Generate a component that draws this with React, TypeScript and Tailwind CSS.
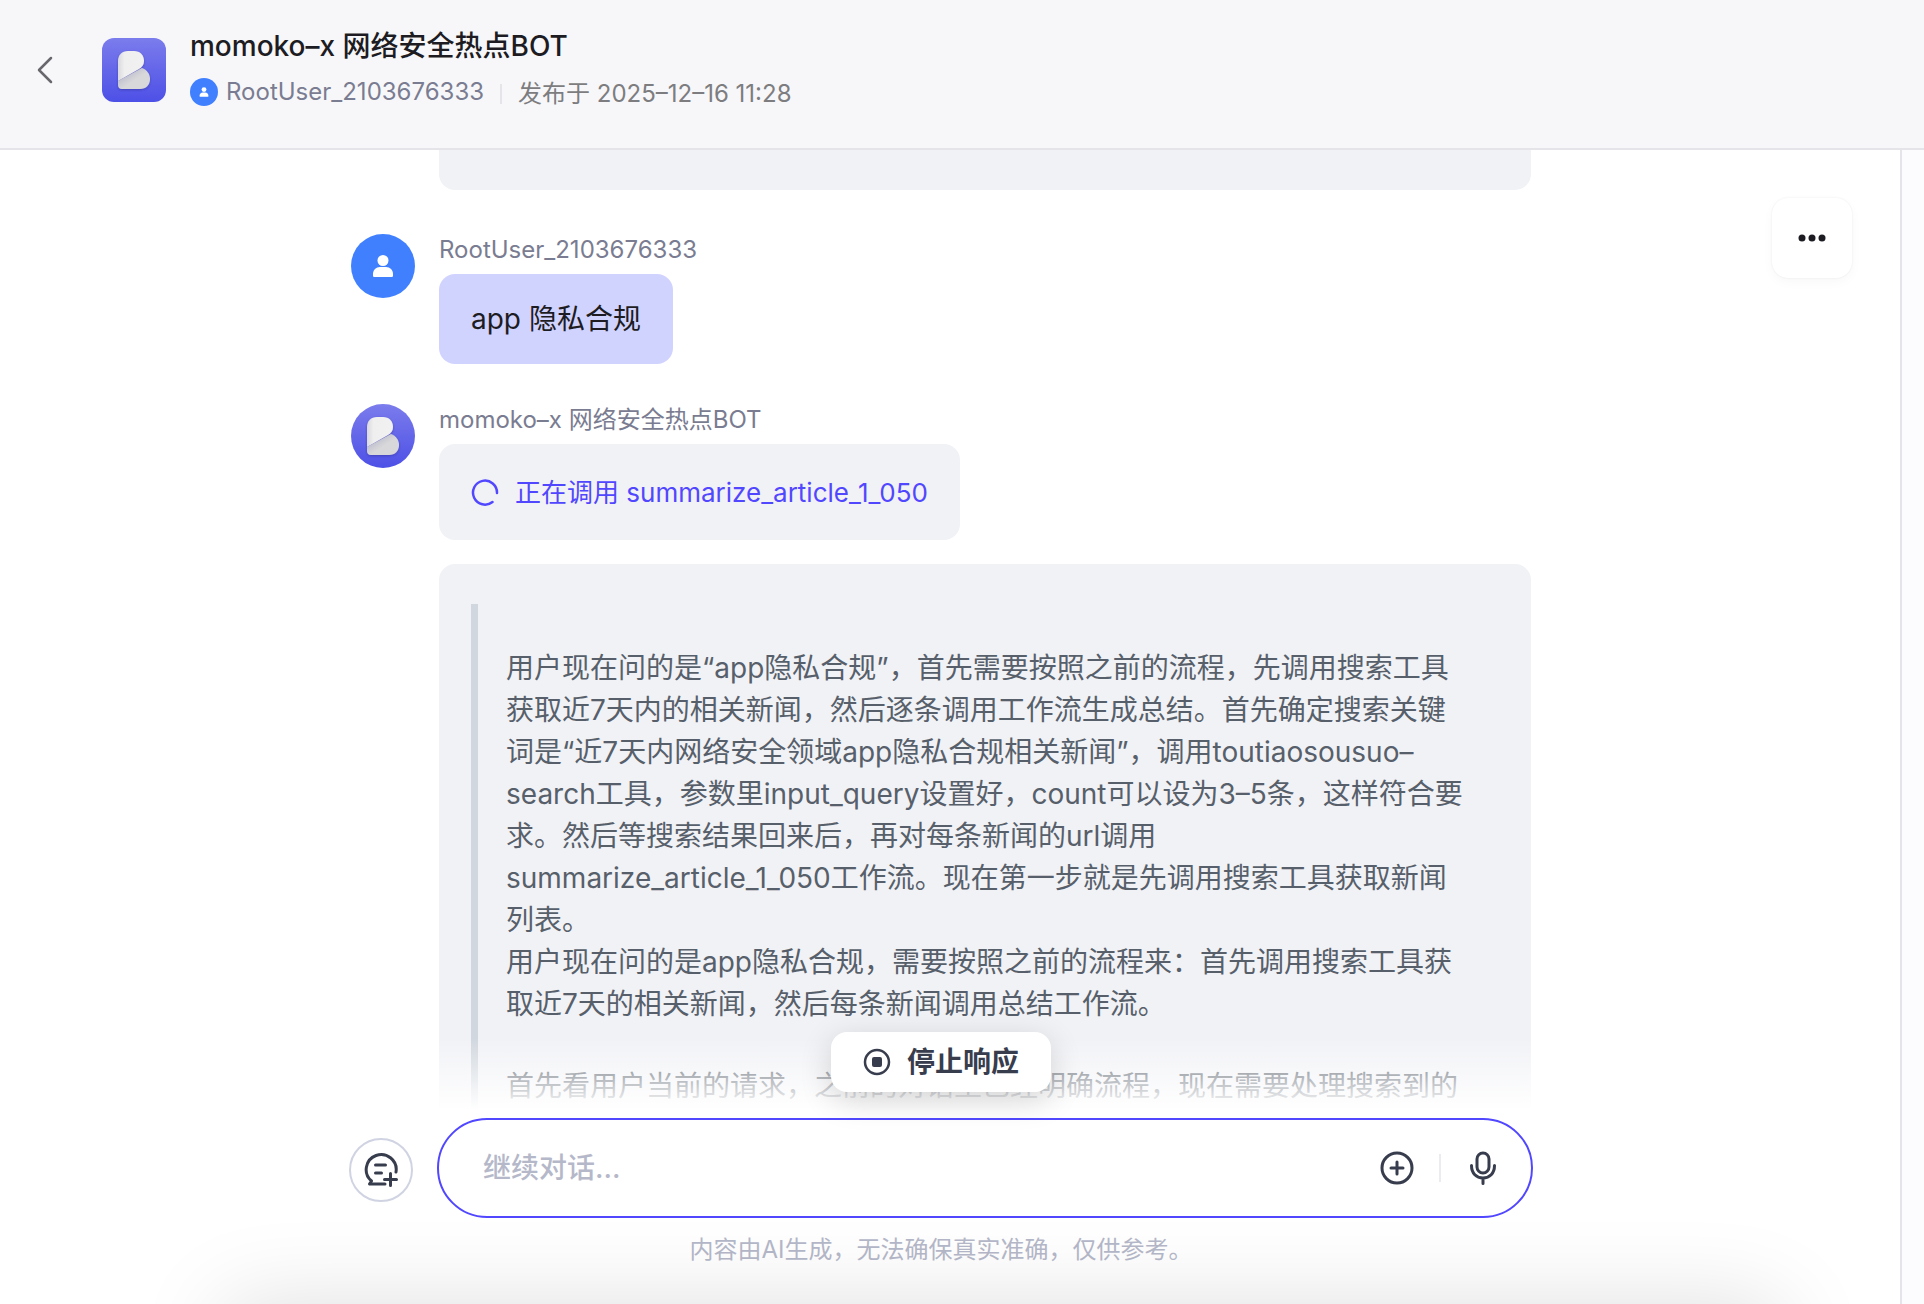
import { useState } from "react";
import type { ReactNode } from "react";

const pensamento = `用户现在问的是“app隐私合规”，首先需要按照之前的流程，先调用搜索工具获取近7天内的相关新闻，然后逐条调用工作流生成总结。首先确定搜索关键词是“近7天内网络安全领域app隐私合规相关新闻”，调用toutiaosousuo–search工具，参数里input_query设置好，count可以设为3–5条，这样符合要求。然后等搜索结果回来后，再对每条新闻的url调用summarize_article_1_050工作流。现在第一步就是先调用搜索工具获取新闻列表。`;

function BotLogo({ id, className }: { id: string; className: string }) {
  return (
    <svg viewBox="0 0 64 64" className={className} aria-hidden="true">
      <defs>
        <linearGradient id={`${id}-bg`} x1="0" y1="0" x2="0" y2="1">
          <stop offset="0" stopColor="#7b7cec" />
          <stop offset="1" stopColor="#4d50e6" />
        </linearGradient>
        <linearGradient id={`${id}-top`} x1="0" y1="0" x2="1" y2="0">
          <stop offset="0" stopColor="#d9d9de" />
          <stop offset="0.25" stopColor="#efeff0" />
          <stop offset="1" stopColor="#f1f1f1" />
        </linearGradient>
        <linearGradient id={`${id}-low`} x1="0" y1="0" x2="1" y2="1">
          <stop offset="0.2" stopColor="#b9b9cc" />
          <stop offset="0.55" stopColor="#d8d8da" />
        </linearGradient>
        <filter id={`${id}-sh`} x="-30%" y="-30%" width="160%" height="160%">
          <feDropShadow dx="0" dy="1" stdDeviation="1" floodColor="#2a2a8a" floodOpacity="0.5" />
        </filter>
      </defs>
      <rect width="64" height="64" fill={`url(#${id}-bg)`} />
      <g filter={`url(#${id}-sh)`}>
        <path d="M16 43 40 30c5 2 8 6 8 11 0 6-4 10-10 10H20c-3 0-4-2-4-4z" fill={`url(#${id}-low)`} />
        <path d="M16 43V23c0-6 4-10 10-10h6c6 0 10 4 10 10 0 4-2 6-5 8z" fill={`url(#${id}-top)`} />
      </g>
    </svg>
  );
}

function UserAvatar({ className }: { className: string }) {
  return (
    <svg viewBox="0 0 64 64" className={className} aria-hidden="true">
      <rect width="64" height="64" fill="#4080ff" />
      <circle cx="32" cy="26.500" r="5.500" fill="#fff" />
      <path d="M22 40c0-4 3-7 7-7h6c4 0 7 3 7 7v1.500c0 1-.6 1.500-1.500 1.500h-17c-.9 0-1.500-.5-1.500-1.500z" fill="#fff" />
    </svg>
  );
}

function Mensagem({ avatar, nome, children }: { avatar: ReactNode; nome: string; children: ReactNode }) {
  return (
    <article className="flex items-start gap-6">
      {avatar}
      <div className="min-w-0 flex-1">
        <h2 className="h-10 text-2xl leading-8 text-[#7a7c91]">{nome}</h2>
        {children}
      </div>
    </article>
  );
}

export default function App() {
  const [texto, setTexto] = useState("");

  return (
    <div className={`relative flex h-screen flex-col overflow-hidden bg-white ${fonte}`}>
      <header className="flex h-[150px] shrink-0 items-center border-b-2 border-[#e5e5e9] bg-[#f7f7fa] pb-2 pl-8">
        <button aria-label="返回" className="grid h-12 w-7 place-items-center">
          <svg viewBox="0 0 28 32" className="h-8 w-7" fill="none" stroke="#68686c" strokeWidth="2.500" strokeLinecap="round" strokeLinejoin="round"><path d="M19 4 7 16l12 12" /></svg>
        </button>
        <BotLogo id="topo" className="ml-[42px] size-16 rounded-xl" />
        <div className="ml-6 flex flex-col gap-2 pb-1">
          <h1 className="text-[28px] leading-10 font-medium text-[#1d1c23]">momoko–x 网络安全热点BOT</h1>
          <div className="flex h-9 items-start text-2xl leading-9 text-[#7a7c91]">
            <UserAvatar className="mt-1 mr-2 size-7 rounded-full" />
            <span>RootUser_2103676333</span>
            <span className="mx-4 mt-2.5 h-5 w-0.5 bg-[#e5e5e9]" />
            <span className="pt-0.5 text-[#7d7d80]">发布于 2025–12–16 11:28</span>
          </div>
        </div>
      </header>

      <div className="flex min-h-0 flex-1">
        <main className="relative flex min-w-0 flex-1 flex-col pr-[18px]">
          <div className="min-h-0 flex-1 overflow-hidden">
            <div className="mx-auto w-[1180px] max-w-full">
              <div className="ml-[88px] h-10 rounded-b-2xl bg-[#f1f2f6]" />

              <div className="mt-11">
                <Mensagem nome="RootUser_2103676333" avatar={<UserAvatar className="size-16 rounded-full" />}>
                  <p className="w-fit rounded-2xl bg-[#d1d3ff] px-8 py-6 text-[28px] leading-[42px] text-[#1d1c23]">app 隐私合规</p>
                </Mensagem>
              </div>

              <div className="mt-10">
                <Mensagem nome="momoko–x 网络安全热点BOT" avatar={<BotLogo id="msg" className="size-16 rounded-full" />}>
                  <div className="flex h-24 w-fit items-center gap-4 rounded-2xl bg-[#f1f2f6] px-8 text-[26px] text-[#5147ff]">
                    <svg viewBox="0 0 28 28" className="size-7" fill="none" stroke="#5147ff" strokeWidth="2.500" strokeLinecap="round"><path d="M26 15A12 12 0 1 0 21.500 24" /></svg>
                    <span>正在调用 summarize_article_1_050</span>
                  </div>
                  <div className="mt-6 rounded-t-2xl bg-[#f1f2f6] px-8 pt-10">
                    <blockquote className="border-l-[7px] border-[#d0d7de] pt-[43px] pr-8 pl-7 text-[28px] leading-[42px] text-[#57606a]">
                      <p>{pensamento}</p>
                      <p>用户现在问的是app隐私合规，需要按照之前的流程来：首先调用搜索工具获取近7天的相关新闻，然后每条新闻调用总结工作流。</p>
                      <p className="mt-10">首先看用户当前的请求，之前的对话里已经明确流程，现在需要处理搜索到的每条新闻，逐条调用工作流。</p>
                    </blockquote>
                  </div>
                </Mensagem>
              </div>
            </div>
          </div>

          {/* rodapé sobe por cima da conversa com o degradê */}
          <div className="relative -mt-20 shrink-0 bg-linear-to-b from-transparent to-white to-[72px]">
            <div className="mx-auto flex w-[1184px] max-w-full items-center gap-6 pt-20">
              <button aria-label="新建对话" className="mt-1 grid size-16 shrink-0 place-items-center rounded-full border-2 border-[#d0d3e2] bg-white">
                <svg viewBox="0 0 36 36" className="size-9" {...traco}>
                  <path d="M33 20A15 15 0 1 0 8.500 29L6.500 32H22M12.500 13h10M12.500 21h6M27.500 21.500v12M21.500 27.500h12" />
                </svg>
              </button>
              <div className="flex h-[100px] flex-1 items-center rounded-full border-2 border-[#5147ff] bg-white pr-6 pl-11">
                <input aria-label="继续对话" value={texto} onChange={(e) => setTexto(e.target.value)} placeholder="继续对话..." className="min-w-0 flex-1 bg-transparent text-[28px] font-medium outline-none placeholder:text-[#b5b8c9]" />
                <button aria-label="添加" className={botao}>
                  <svg viewBox="0 0 36 36" className="size-9" {...traco}><circle cx="18" cy="18" r="15" /><path d="M18 12v12M12 18h12" /></svg>
                </button>
                <span className="mx-[18px] h-7 w-0.5 bg-[#ececf0]" />
                <button aria-label="语音输入" className={botao}>
                  <svg viewBox="0 0 36 36" className="size-9" {...traco}><rect x="12" y="3" width="12" height="20" rx="6" /><path d="M6.500 15.500c0 8 5 12.500 11.500 12.500s11.500-4.500 11.500-12.500M18 28v5.500" /></svg>
                </button>
              </div>
            </div>
            <p className="pt-4 pb-[38px] text-center text-2xl leading-8 text-[#b5b8c9]">内容由AI生成，无法确保真实准确，仅供参考。</p>
            <button className="absolute -top-1.5 left-1/2 flex h-[60px] -translate-x-1/2 items-center gap-4 rounded-2xl bg-white px-8 text-[28px] font-semibold text-[#383d4e] shadow-[0_8px_32px_rgba(0,0,0,0.16)]">
              <svg viewBox="0 0 28 28" className="size-7" fill="none" stroke="#383d4e" strokeWidth="2.500"><circle cx="14" cy="14" r="12" /><rect x="9" y="9" width="10" height="10" rx="2" fill="#383d4e" stroke="none" /></svg>
              停止响应
            </button>
          </div>

          <button aria-label="更多" className="absolute top-12 right-12 grid size-20 place-items-center rounded-2xl bg-white shadow-[0_4px_12px_rgba(0,0,0,0.03),0_0_2px_rgba(0,0,0,0.08)]">
            <svg viewBox="0 0 28 8" className="h-2 w-7" fill="#1d1c23"><circle cx="4" cy="4" r="3.500" /><circle cx="14" cy="4" r="3.500" /><circle cx="24" cy="4" r="3.500" /></svg>
          </button>
        </main>
        <aside className="w-6 shrink-0 border-l-2 border-[#e5e5e9] bg-[#fcfcff]" />
      </div>

      {/* sombra na borda inferior da janela */}
      <div className="pointer-events-none absolute top-full right-36 left-56 h-32 shadow-[0_0_90px_rgba(0,0,0,0.13)]" />
    </div>
  );
}

const fonte = "font-['Inter','Noto_Sans_CJK_SC',sans-serif]";
const botao = "grid size-12 place-items-center rounded-full";
const traco = { fill: "none", stroke: "#383d4e", strokeWidth: 3, strokeLinecap: "round", strokeLinejoin: "round" } as const;
